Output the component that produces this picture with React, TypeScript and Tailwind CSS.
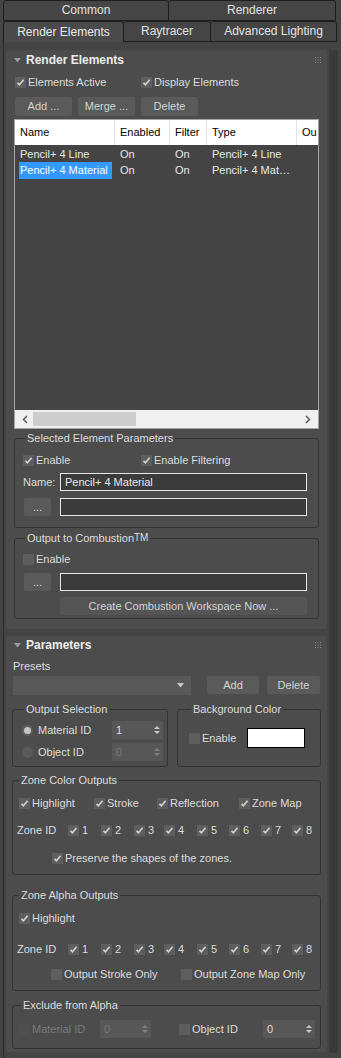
import React from "react";

function CheckBox({ checked, disabled }: { checked?: boolean; disabled?: boolean }) {
  return (
    <span
      className={
        "w-[11px] h-[11px] shrink-0 flex items-center justify-center " +
        (disabled ? "bg-[#4f4f4f]" : "bg-[#5e5e5e]")
      }
    >
      {checked && (
        <svg width="9" height="9" viewBox="0 0 9 9">
          <path d="M1.5 4.8 L3.4 6.8 L7.6 1.8" stroke="#cfcfcf" strokeWidth="1.7" fill="none" />
        </svg>
      )}
    </span>
  );
}

function Check({
  label,
  checked,
  disabled,
  className,
}: {
  label: React.ReactNode;
  checked?: boolean;
  disabled?: boolean;
  className?: string;
}) {
  return (
    <div className={"flex items-center gap-[2px] h-[13px] shrink-0 " + (className || "")}>
      <CheckBox checked={checked} disabled={disabled} />
      <span className={"whitespace-nowrap " + (disabled ? "text-[#7a7a7a]" : "text-[#dcdcdc]")}>{label}</span>
    </div>
  );
}

function Radio({ label, selected }: { label: string; selected?: boolean }) {
  return (
    <div className="flex items-center gap-[5px]">
      <span
        className={
          "w-[11px] h-[11px] rounded-full shrink-0 flex items-center justify-center " +
          (selected ? "bg-[#5e5e5e]" : "bg-[#5a5a5a]")
        }
      >
        {selected && <span className="w-[7px] h-[7px] rounded-full bg-[#c4c4c4]" />}
      </span>
      <span className="text-[#dcdcdc] whitespace-nowrap">{label}</span>
    </div>
  );
}

function Spinner({ value, disabled, className }: { value: string; disabled?: boolean; className?: string }) {
  return (
    <div
      className={
        "h-[18px] shrink-0 bg-[#575757] flex items-center justify-between pl-[4px] pr-[3px] " + (className || "")
      }
    >
      <span className={disabled ? "text-[#777]" : "text-[#dcdcdc]"}>{value}</span>
      <svg width="6" height="10" viewBox="0 0 6 10">
        <path d="M0 4 L3 1 L6 4 Z" fill={disabled ? "#808080" : "#c8c8c8"} />
        <path d="M0 6 L3 9 L6 6 Z" fill={disabled ? "#808080" : "#c8c8c8"} />
      </svg>
    </div>
  );
}

function Btn({ children, className }: { children: React.ReactNode; className?: string }) {
  return (
    <div
      className={
        "bg-[#5a5a5a] rounded-[2px] shrink-0 flex items-center justify-center text-[#d2d2d2] whitespace-nowrap " +
        (className || "")
      }
    >
      {children}
    </div>
  );
}

function RolloutHeader({ title }: { title: string }) {
  return (
    <div className="flex items-center h-[20px] pl-[8px] pr-[6px]">
      <svg width="7" height="5" viewBox="0 0 7 5" className="mr-[5px]">
        <path d="M0 0 L7 0 L3.5 4.5 Z" fill="#9a9a9a" />
      </svg>
      <span className="font-bold text-[12px] text-[#ececec] flex-1">{title}</span>
      <svg width="6" height="6" viewBox="0 0 6 6">
        {[0, 2.5, 5].map((x) =>
          [0, 2.5, 5].map((y) => <rect key={`${x}-${y}`} x={x} y={y} width="1" height="1" fill="#8a8a8a" />)
        )}
      </svg>
    </div>
  );
}

function Group({
  title,
  className,
  children,
}: {
  title: React.ReactNode;
  className?: string;
  children: React.ReactNode;
}) {
  return (
    <fieldset className={"border border-[#333] rounded-[3px] min-w-0 " + (className || "")}>
      <legend className="ml-[2px] px-[2px] text-[#dcdcdc] leading-[14px] whitespace-nowrap">{title}</legend>
      {children}
    </fieldset>
  );
}

const zoneWidths = ["w-[33px]", "w-[33px]", "w-[30px]", "w-[33px]", "w-[32px]", "w-[32px]", "w-[31px]", "w-[24px]"];

function ZoneRow({ className }: { className?: string }) {
  return (
    <div className={"flex items-center " + (className || "")}>
      <span className="w-[51px] shrink-0 text-[#dcdcdc]">Zone ID</span>
      {[1, 2, 3, 4, 5, 6, 7, 8].map((n, i) => (
        <div key={n} className={"shrink-0 " + zoneWidths[i]}>
          <div className="flex items-center gap-[3px]">
            <CheckBox checked />
            <span className="text-[#dcdcdc]">{n}</span>
          </div>
        </div>
      ))}
    </div>
  );
}

export default function App() {
  return (
    <div className="w-[341px] h-[1058px] bg-[#444] overflow-hidden text-[11px] leading-[13px] font-['Liberation_Sans',Arial,sans-serif] text-[#dcdcdc]">
      {/* Tabs */}
      <div className="flex pl-[3px] h-[21px]">
        <div className="w-[166px] h-full border border-[#1e1e1e] rounded-t-[3px] bg-[#454545] flex items-center justify-center text-[#e2e2e2] text-[12px]">
          Common
        </div>
        <div className="w-[167px] h-full border border-l-0 border-[#1e1e1e] rounded-t-[3px] bg-[#454545] flex items-center justify-center text-[#e2e2e2] text-[12px]">
          Renderer
        </div>
      </div>
      <div className="flex pl-[3px] h-[21px]">
        <div className="w-[121px] h-full border border-b-0 border-[#1e1e1e] rounded-t-[3px] bg-[#4a4a4a] flex items-center justify-center text-[#e8e8e8] text-[12px]">
          Render Elements
        </div>
        <div className="w-[87px] h-full border border-l-0 border-[#1e1e1e] rounded-t-[3px] bg-[#454545] flex items-center justify-center text-[#e2e2e2] text-[12px]">
          Raytracer
        </div>
        <div className="w-[126px] h-full border border-l-0 border-[#1e1e1e] rounded-t-[3px] bg-[#454545] flex items-center justify-center text-[#e2e2e2] text-[12px]">
          Advanced Lighting
        </div>
      </div>

      <div className="flex ml-[3px] border-l border-[#2a2a2a] h-[1016px]">
        <div className="w-[324px] pl-[2px] pt-[8px] flex flex-col">
          {/* Rollout 1 */}
          <div className="bg-[#4c4c4c] rounded-[3px] w-[321px] pb-[10px]">
            <RolloutHeader title="Render Elements" />
            <div className="px-[8px]">
              <div className="flex mt-[6px] h-[12px] items-center">
                <Check className="w-[126px] ml-[1px]" checked label="Elements Active" />
                <Check checked label="Display Elements" />
              </div>
              <div className="flex gap-[6px] mt-[9px] ml-[1px]">
                <Btn className="w-[57px] h-[19px]">Add ...</Btn>
                <Btn className="w-[57px] h-[19px]">Merge ...</Btn>
                <Btn className="w-[57px] h-[19px]">Delete</Btn>
              </div>
              {/* List */}
              <div className="mt-[3px] h-[310px] border border-[#a5a5a5] flex flex-col bg-[#444] overflow-hidden">
                <div className="h-[25px] bg-white flex text-black text-[11px] items-center overflow-hidden shrink-0">
                  <div className="w-[100px] shrink-0 h-full pl-[5px] flex items-center border-r border-[#e3e3e3]">Name</div>
                  <div className="w-[55px] shrink-0 h-full pl-[5px] flex items-center border-r border-[#e3e3e3]">Enabled</div>
                  <div className="w-[37px] shrink-0 h-full pl-[5px] flex items-center border-r border-[#e3e3e3]">Filter</div>
                  <div className="w-[90px] shrink-0 h-full pl-[5px] flex items-center border-r border-[#e3e3e3]">Type</div>
                  <div className="w-[40px] shrink-0 h-full pl-[5px] flex items-center">Ou</div>
                </div>
                <div className="flex-1 pt-[1px] text-[#e8e8e8]">
                  <div className="flex h-[16px] items-center">
                    <div className="w-[100px] shrink-0 pl-[5px]">Pencil+ 4 Line</div>
                    <div className="w-[55px] shrink-0 pl-[5px]">On</div>
                    <div className="w-[37px] shrink-0 pl-[5px]">On</div>
                    <div className="w-[90px] shrink-0 pl-[5px]">Pencil+ 4 Line</div>
                  </div>
                  <div className="flex h-[17px] items-center">
                    <div className="w-[100px] shrink-0 pl-[4px] h-full">
                      <span className="bg-[#3399ff] text-white h-full w-[93px] flex items-center pl-[1px]">
                        Pencil+ 4 Material
                      </span>
                    </div>
                    <div className="w-[55px] shrink-0 pl-[5px]">On</div>
                    <div className="w-[37px] shrink-0 pl-[5px]">On</div>
                    <div className="w-[90px] shrink-0 pl-[5px] whitespace-nowrap">Pencil+ 4 Mat…</div>
                  </div>
                </div>
                <div className="h-[18px] shrink-0 bg-[#f0f0f0] flex items-center px-[7px]">
                  <svg width="6" height="9" viewBox="0 0 6 9">
                    <path d="M5 1 L1.5 4.5 L5 8" stroke="#606060" strokeWidth="1.5" fill="none" />
                  </svg>
                  <div className="w-[103px] h-[14px] bg-[#cdcdcd] ml-[5px]" />
                  <div className="flex-1" />
                  <svg width="6" height="9" viewBox="0 0 6 9">
                    <path d="M1 1 L4.5 4.5 L1 8" stroke="#606060" strokeWidth="1.5" fill="none" />
                  </svg>
                </div>
              </div>

              {/* Selected Element Parameters */}
              <Group title="Selected Element Parameters" className="mt-[2px] pl-[8px] pr-[11px] pb-[11px]">
                <div className="flex mt-[9px] h-[12px] items-center">
                  <Check className="w-[118px]" checked label="Enable" />
                  <Check checked label="Enable Filtering" />
                </div>
                <div className="flex items-center mt-[7px] h-[18px]">
                  <span className="w-[37px] shrink-0 text-[#dcdcdc]">Name:</span>
                  <div className="flex-1 h-[18px] border border-[#e6e6e6] bg-[#3b3b3b] flex items-center pl-[4px] text-[#e8e8e8]">
                    Pencil+ 4 Material
                  </div>
                </div>
                <div className="flex items-center mt-[7px] h-[18px]">
                  <Btn className="w-[27px] h-[18px] ml-[1px] mr-[9px] text-[#bdbdbd]">...</Btn>
                  <div className="flex-1 h-[18px] border border-[#e6e6e6] bg-[#3b3b3b]" />
                </div>
              </Group>

              {/* Output to Combustion */}
              <Group
                title={
                  <span>
                    Output to Combustion<sup className="text-[10px] relative top-[-1px]">TM</sup>
                  </span>
                }
                className="mt-[3px] pl-[8px] pr-[11px] pb-[3px]"
              >
                <div className="flex mt-[8px] h-[12px] items-center">
                  <Check label="Enable" />
                </div>
                <div className="flex items-center mt-[8px] h-[18px]">
                  <Btn className="w-[27px] h-[18px] ml-[1px] mr-[9px] text-[#bdbdbd]">...</Btn>
                  <div className="flex-1 h-[18px] border border-[#e6e6e6] bg-[#3b3b3b]" />
                </div>
                <div className="flex mt-[6px]">
                  <div className="w-[37px] shrink-0" />
                  <Btn className="flex-1 h-[18px] bg-[#555]">Create Combustion Workspace Now ...</Btn>
                </div>
              </Group>
            </div>
          </div>

          {/* Rollout 2 */}
          <div className="bg-[#4c4c4c] rounded-[3px] w-[321px] mt-[7px] pb-[3px]">
            <div className="h-[18px] flex flex-col justify-center">
              <RolloutHeader title="Parameters" />
            </div>
            <div className="pl-[6px] pr-[6px]">
              <div className="mt-[6px] h-[12px] flex items-center pl-[1px]">Presets</div>
              <div className="flex mt-[4px] items-start">
                <div className="w-[178px] shrink-0 h-[19px] ml-[1px] bg-[#595959] flex items-center justify-end pr-[7px]">
                  <svg width="7" height="5" viewBox="0 0 7 5">
                    <path d="M0 0 L7 0 L3.5 4.5 Z" fill="#c8c8c8" />
                  </svg>
                </div>
                <Btn className="w-[52px] h-[18px] ml-[16px]">Add</Btn>
                <Btn className="w-[53px] h-[18px] ml-[8px]">Delete</Btn>
              </div>

              <div className="flex mt-[7px] gap-[9px]">
                <Group title="Output Selection" className="w-[156px] h-[65px] pl-[9px] pr-[4px]">
                  <div className="flex items-center mt-[5px] h-[18px]">
                    <div className="w-[90px] shrink-0">
                      <Radio selected label="Material ID" />
                    </div>
                    <Spinner value="1" className="w-[51px]" />
                  </div>
                  <div className="flex items-center mt-[4px] h-[18px]">
                    <div className="w-[90px] shrink-0">
                      <Radio label="Object ID" />
                    </div>
                    <Spinner value="0" disabled className="w-[51px]" />
                  </div>
                </Group>
                <Group title="Background Color" className="w-[144px] h-[65px] pl-[11px]">
                  <div className="flex items-center mt-[12px]">
                    <Check className="w-[58px]" label="Enable" />
                    <div className="w-[58px] h-[20px] bg-white border border-black" />
                  </div>
                </Group>
              </div>

              <Group title="Zone Color Outputs" className="mt-[6px] pl-[4px] pb-[9px]">
                <div className="flex items-center mt-[10px] h-[13px] ml-[2px]">
                  <Check className="w-[75px]" checked label="Highlight" />
                  <Check className="w-[63px]" checked label="Stroke" />
                  <Check className="w-[82px]" checked label="Reflection" />
                  <Check checked label="Zone Map" />
                </div>
                <ZoneRow className="mt-[14px] h-[13px]" />
                <div className="flex mt-[15px] h-[13px] pl-[35px]">
                  <Check checked label="Preserve the shapes of the zones." />
                </div>
              </Group>

              <Group title="Zone Alpha Outputs" className="mt-[13px] pl-[4px] pb-[9px]">
                <div className="flex items-center mt-[10px] h-[13px] ml-[2px]">
                  <Check checked label="Highlight" />
                </div>
                <ZoneRow className="mt-[18px] h-[13px]" />
                <div className="flex mt-[12px] h-[13px] pl-[34px]">
                  <Check className="w-[130px]" label="Output Stroke Only" />
                  <Check label="Output Zone Map Only" />
                </div>
              </Group>

              <Group title="Exclude from Alpha" className="mt-[7px] pl-[6px] pb-[10px]">
                <div className="flex items-center mt-[8px] h-[18px]">
                  <Check className="w-[81px]" disabled label="Material ID" />
                  <Spinner value="0" disabled className="w-[51px] bg-[#505050]" />
                  <div className="w-[28px] shrink-0" />
                  <Check className="w-[84px]" label="Object ID" />
                  <Spinner value="0" className="w-[52px]" />
                </div>
              </Group>
            </div>
          </div>
        </div>
        {/* Right scrollbar strip */}
        <div className="w-[9px] mt-[8px] h-[1003px] bg-[#3a3a3a] ml-[1px] rounded-[2px]" />
      </div>
    </div>
  );
}
